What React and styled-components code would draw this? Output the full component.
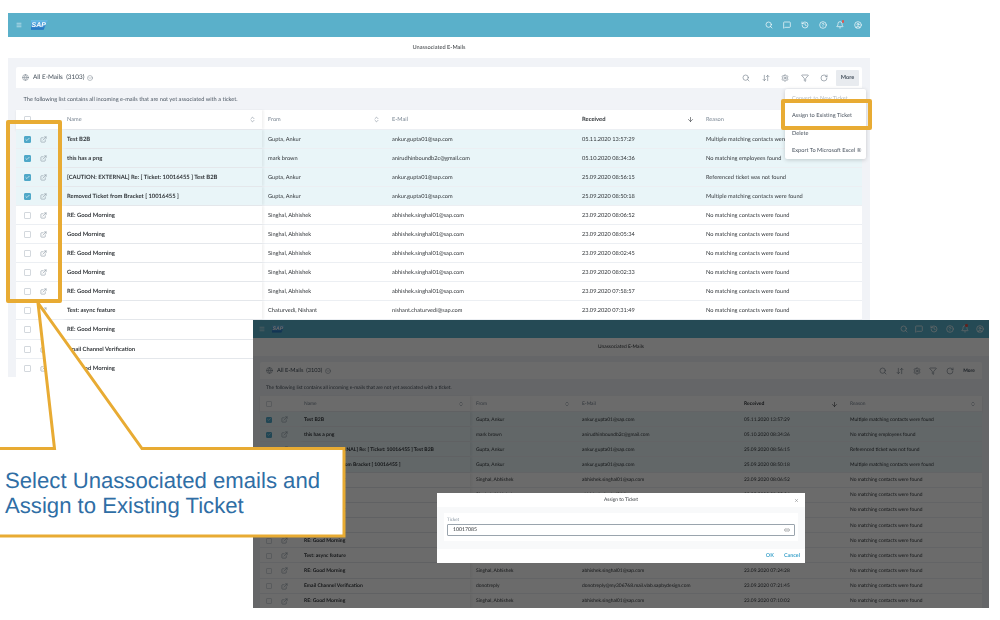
import React from 'react';
import styled, { createGlobalStyle, ThemeProvider } from 'styled-components';
import {
  Search, MessageSquare, History, CircleHelp, Bell, CircleUser, ArrowDownUp, Settings,
  Filter, RotateCw, Globe, CircleChevronDown, ExternalLink, ChevronsUpDown, ArrowDown,
  Check, Menu, Link2, X,
} from 'lucide-react';

const ORANGE = '#e8ab33';

const large = {
  bar: 24, title: 21, gap: 9, side: 8, head: 21, info: 22, th: 19.5, row: 19.1,
  font: 5.65, strong: 5.85, icon: 8, box: 7, pad: 7.5, boxGap: 9, iconSlots: 17.8, barPad: 8, barEnd: 3,
  toolGap: 11.5, cols: '46px 200px 124px 190px 124px 1fr', morePad: 23, moreBg: '#e8ebef',
};

const small = {
  bar: 18, title: 18, gap: 6, side: 7, head: 17, info: 17, th: 16, row: 15.15,
  font: 4.9, strong: 5.05, icon: 7, box: 6, pad: 6, boxGap: 9, iconSlots: 15.3, barPad: 6, barEnd: 1,
  toolGap: 8.7, cols: '39px 171px 106px 162px 106px 1fr', morePad: 20, moreBg: 'transparent',
};

const singhal = { from: 'Singhal, Abhishek', email: 'abhishek.singhal01@sap.com' };
const gupta = { from: 'Gupta, Ankur', email: 'ankur.gupta01@sap.com' };
const noContacts = 'No matching contacts were found';
const multiple = 'Multiple matching contacts were found';

const rows = [
  { ...gupta, name: 'Test B2B', at: '05.11.2020 13:57:29', reason: multiple, selected: true },
  { name: 'this has a png', from: 'mark brown', email: 'anirudhinboundb2c@gmail.com', at: '05.10.2020 08:34:36', reason: 'No matching employees found', selected: true },
  { ...gupta, name: '[CAUTION: EXTERNAL] Re: [ Ticket: 10016455 ] Test B2B', at: '25.09.2020 08:56:15', reason: 'Referenced ticket was not found', selected: true },
  { ...gupta, name: 'Removed Ticket from Bracket [ 10016455 ]', at: '25.09.2020 08:50:18', reason: multiple, selected: true },
  { ...singhal, name: 'RE: Good Morning', at: '23.09.2020 08:06:52', reason: noContacts },
  { ...singhal, name: 'Good Morning', at: '23.09.2020 08:05:34', reason: noContacts },
  { ...singhal, name: 'RE: Good Morning', at: '23.09.2020 08:02:45', reason: noContacts },
  { ...singhal, name: 'Good Morning', at: '23.09.2020 08:02:33', reason: noContacts },
  { ...singhal, name: 'RE: Good Morning', at: '23.09.2020 07:58:57', reason: noContacts },
  { name: 'Test: async feature', from: 'Chaturvedi, Nishant', email: 'nishant.chaturvedi@sap.com', at: '23.09.2020 07:31:49', reason: noContacts },
  { ...singhal, name: 'RE: Good Morning', at: '23.09.2020 07:24:28', reason: noContacts },
  { name: 'Email Channel Verification', from: 'donotreply', email: 'donotreply@my306768.mail.vlab.sapbydesign.com', at: '23.09.2020 07:21:45', reason: noContacts },
  { ...singhal, name: 'RE: Good Morning', at: '23.09.2020 07:10:02', reason: noContacts },
];

const GlobalStyle = createGlobalStyle`
  html, body {
    margin: 0;
    background: #fff;
  }
  * {
    box-sizing: border-box;
  }
`;

const Slide = styled.div`
  position: relative;
  width: 1000px;
  height: 620px;
  overflow: hidden;
  background: #fff;
  font-family: Lato, "Open Sans", "Liberation Sans", sans-serif;
  text-rendering: geometricPrecision;
`;

const Window = styled.div`
  position: absolute;
  left: ${({ $x }) => $x}px;
  top: ${({ $y }) => $y}px;
  width: ${({ $w }) => $w}px;
  height: ${({ $h }) => $h}px;
  display: flex;
  flex-direction: column;
  overflow: hidden;
  background: #fff;
  font-size: ${({ theme }) => theme.font}px;
  color: #32363a;
  filter: blur(0.3px);
`;

const ShellBar = styled.div`
  flex: none;
  height: ${({ theme }) => theme.bar}px;
  display: flex;
  align-items: center;
  padding: 0 ${({ theme }) => theme.barEnd}px 0 ${({ theme }) => theme.barPad}px;
  background: #5ab0ca;
  color: #fff;
`;

const LogoMark = styled.div`
  width: ${({ theme }) => theme.bar * 0.7}px;
  height: ${({ theme }) => theme.bar * 0.4}px;
  margin-left: ${({ theme }) => theme.barPad + 1}px;
  display: flex;
  align-items: center;
  padding-left: 0.5px;
  background: linear-gradient(#6cc0ea, #1f6fc0);
  clip-path: polygon(0 0, 100% 0, 75% 100%, 0 100%);
  font: italic 700 ${({ theme }) => theme.bar * 0.29}px "Liberation Sans", sans-serif;
`;

const ShellIcons = styled.div`
  margin-left: auto;
  display: flex;
  align-items: center;
`;

const ShellIcon = styled.span`
  position: relative;
  width: ${({ theme }) => theme.iconSlots}px;
  display: flex;
  justify-content: center;
`;

const AlertDot = styled.i`
  position: absolute;
  top: -1px;
  right: 5px;
  width: 2.5px;
  height: 2.5px;
  border-radius: 50%;
  background: #e0554d;
`;

const PageTitle = styled.div`
  flex: none;
  height: ${({ theme }) => theme.title}px;
  display: flex;
  align-items: center;
  justify-content: center;
`;

const Panel = styled.div`
  flex: 1;
  min-height: 0;
  padding: ${({ theme }) => theme.gap}px ${({ theme }) => theme.side}px 0;
  background: #f1f3f7;
`;

const CardHead = styled.div`
  height: ${({ theme }) => theme.head}px;
  display: flex;
  align-items: center;
  gap: 3px;
  padding: 0 3px 0 6px;
  background: #fff;
  border-radius: 2px 2px 0 0;
  color: #3f4a55;
  svg {
    color: #7c8791;
  }
`;

const CardTitle = styled.span`
  margin-left: 1px;
  font-size: ${({ theme }) => theme.font + 0.75}px;
`;

const CardTools = styled.div`
  margin-left: auto;
  display: flex;
  align-items: center;
  gap: ${({ theme }) => theme.toolGap}px;
`;

const MoreButton = styled.div`
  width: ${({ theme }) => theme.morePad}px;
  height: ${({ theme }) => theme.head - 5}px;
  margin-left: -3.6px;
  display: flex;
  align-items: center;
  justify-content: center;
  border-radius: 1px;
  background: ${({ theme }) => theme.moreBg};
  font-weight: 700;
  color: #4a5561;
`;

const InfoRow = styled.div`
  height: ${({ theme }) => theme.info}px;
  display: flex;
  align-items: center;
  padding-left: ${({ theme }) => theme.pad}px;
  color: #4a5561;
`;

const Row = styled.div`
  display: grid;
  grid-template-columns: ${({ theme }) => theme.cols};
  height: ${({ theme }) => theme.row}px;
  background: ${({ $selected }) => ($selected ? '#e9f5f8' : '#fff')};
  border-bottom: 1px solid #eceff3;
`;

const HeadRow = styled(Row)`
  height: ${({ theme }) => theme.th}px;
  box-shadow: 0 1px 2px rgba(0, 0, 0, 0.08);
  color: #7b8794;
`;

const Cell = styled.div`
  display: flex;
  align-items: center;
  justify-content: space-between;
  min-width: 0;
  padding: 1px 6px 0;
  white-space: nowrap;
  font-size: ${({ $strong, theme }) => ($strong ? theme.strong : theme.font)}px;
  font-weight: ${({ $strong }) => ($strong ? 700 : 400)};
  color: ${({ $strong }) => ($strong ? '#32363a' : 'inherit')};
`;

const SelectCell = styled(Cell)`
  justify-content: flex-start;
  gap: ${({ theme }) => theme.boxGap}px;
  padding: 1px 0 0 ${({ theme }) => theme.pad}px;
  color: #8a97a3;
`;

const NameCell = styled(Cell)`
  padding-left: 5px;
  box-shadow: 2px 0 2px rgba(0, 0, 0, 0.05);
`;

const CheckBox = styled.span`
  flex: none;
  width: ${({ theme }) => theme.box}px;
  height: ${({ theme }) => theme.box}px;
  display: flex;
  align-items: center;
  justify-content: center;
  border: 0.7px solid ${({ $checked }) => ($checked ? '#4fa8c8' : '#d3d8dd')};
  border-radius: 1px;
  background: ${({ $checked }) => ($checked ? '#4fa8c8' : '#fff')};
  color: #fff;
`;

const SortIcon = styled(ChevronsUpDown)`
  flex: none;
  width: ${({ theme }) => theme.icon - 1}px;
  height: ${({ theme }) => theme.icon - 1}px;
`;

const Scrim = styled.div`
  position: absolute;
  inset: 0;
  display: flex;
  justify-content: center;
  align-items: flex-start;
  padding-top: 173px;
  background: rgba(0, 0, 0, 0.58);
`;

const Dialog = styled.div`
  width: 368px;
  height: 70px;
  display: flex;
  flex-direction: column;
  background: #fff;
  color: #32363a;
  font-size: 4.9px;
`;

const DialogHead = styled.div`
  position: relative;
  height: 14px;
  display: flex;
  align-items: center;
  justify-content: center;
  svg {
    position: absolute;
    right: 6px;
    color: #6a6d70;
  }
`;

const DialogBody = styled.div`
  height: 42px;
  padding: 6px 7px;
  background: #f8f9fa;
`;

const FormCard = styled.div`
  height: 28px;
  padding: 3px 3px 0;
  background: #fff;
  color: #8a97a3;
  font-size: 4.6px;
`;

const TicketInput = styled.div`
  height: 12px;
  margin-top: 2px;
  display: flex;
  align-items: center;
  justify-content: space-between;
  padding: 0 4px 0 5px;
  border: 1px solid #9aa4ad;
  border-radius: 1px;
  color: #32363a;
  font-size: 5.2px;
`;

const DialogFoot = styled.div`
  flex: 1;
  display: flex;
  align-items: center;
  justify-content: flex-end;
  gap: 10px;
  padding-right: 5px;
  color: #42a5cc;
  font-size: 5.4px;
  font-weight: 700;
`;

const DropMenu = styled.div`
  position: absolute;
  top: 76px;
  right: 4px;
  width: 81px;
  height: 70px;
  display: flex;
  flex-direction: column;
  justify-content: space-around;
  padding: 1px 7px 0;
  background: #fff;
  border-radius: 2px;
  box-shadow: 0 1px 4px rgba(0, 0, 0, 0.18);
  white-space: nowrap;
`;

const MenuItem = styled.div`
  color: ${({ $disabled }) => ($disabled ? '#b3bac1' : '#46505c')};
`;

const Frame = styled.div`
  position: absolute;
  left: ${({ $x }) => $x}px;
  top: ${({ $y }) => $y}px;
  width: ${({ $w }) => $w}px;
  height: ${({ $h }) => $h}px;
  border: 4px solid ${ORANGE};
  border-radius: 2px;
`;

const Callout = styled.div`
  position: absolute;
  left: 0;
  top: 300px;
  width: 350px;
  height: 242px;
`;

const CalloutText = styled.div`
  position: absolute;
  left: 5px;
  top: 168px;
  font: 22.15px/25px "Liberation Sans", Arial, sans-serif;
  color: #2f6ea5;
  white-space: nowrap;
`;

const EmailWindow = ({ menu, children }) => (
  <>
    <ShellBar>
      <Menu size={6} />
      <LogoMark>SAP</LogoMark>
      <ShellIcons>
        <ShellIcon><Search size={8} /></ShellIcon>
        <ShellIcon><MessageSquare size={8} /></ShellIcon>
        <ShellIcon><History size={8} /></ShellIcon>
        <ShellIcon><CircleHelp size={8} /></ShellIcon>
        <ShellIcon><Bell size={8} /><AlertDot /></ShellIcon>
        <ShellIcon><CircleUser size={8} /></ShellIcon>
      </ShellIcons>
    </ShellBar>
    <PageTitle>Unassociated E-Mails</PageTitle>
    <Panel>
      <CardHead>
        <Globe size={7} />
        <CardTitle>All E-Mails&nbsp; (3103)</CardTitle>
        <CircleChevronDown size={6} />
        <CardTools>
          <Search size={8} />
          <ArrowDownUp size={8} />
          <Settings size={8} />
          <Filter size={8} />
          <RotateCw size={8} />
          <MoreButton>More</MoreButton>
        </CardTools>
      </CardHead>
      <InfoRow>The following list contains all incoming e-mails that are not yet associated with a ticket.</InfoRow>
      <HeadRow>
        <SelectCell><CheckBox /></SelectCell>
        <NameCell>Name<SortIcon /></NameCell>
        <Cell>From<SortIcon /></Cell>
        <Cell>E-Mail</Cell>
        <Cell $strong>Received<ArrowDown size={7} /></Cell>
        <Cell>Reason<SortIcon /></Cell>
      </HeadRow>
      {rows.map((row) => (
        <Row key={row.at} $selected={row.selected}>
          <SelectCell>
            <CheckBox $checked={row.selected}>
              {row.selected && <Check size={5} strokeWidth={3} />}
            </CheckBox>
            <ExternalLink size={7} />
          </SelectCell>
          <NameCell $strong>{row.name}</NameCell>
          <Cell>{row.from}</Cell>
          <Cell>{row.email}</Cell>
          <Cell>{row.at}</Cell>
          <Cell>{row.reason}</Cell>
        </Row>
      ))}
    </Panel>
    {menu && (
      <DropMenu>
        <MenuItem $disabled>Convert to New Ticket</MenuItem>
        <MenuItem>Assign to Existing Ticket</MenuItem>
        <MenuItem>Delete</MenuItem>
        <MenuItem>Export To Microsoft Excel ®</MenuItem>
      </DropMenu>
    )}
    {children}
  </>
);

const App = () => (
  <Slide>
    <GlobalStyle />
    <ThemeProvider theme={large}>
      <Window $x={8} $y={13} $w={862} $h={364}>
        <EmailWindow menu />
      </Window>
    </ThemeProvider>
    <ThemeProvider theme={small}>
      <Window $x={253} $y={320} $w={736} $h={288}>
        <EmailWindow>
          <Scrim>
            <Dialog>
              <DialogHead>Assign to Ticket<X size={5} /></DialogHead>
              <DialogBody>
                <FormCard>
                  Ticket
                  <TicketInput>10017085<Link2 size={6} color="#6a6d70" /></TicketInput>
                </FormCard>
              </DialogBody>
              <DialogFoot><span>OK</span><span>Cancel</span></DialogFoot>
            </Dialog>
          </Scrim>
        </EmailWindow>
      </Window>
    </ThemeProvider>
    <Frame $x={6} $y={120} $w={56} $h={183} />
    <Frame $x={781} $y={99} $w={91} $h={31} />
    <Callout>
      <svg width="350" height="242" viewBox="0 0 350 242">
        <path
          d="M-5 148.5H54.5L38 3L142 148.5H344V236H-5Z"
          fill="#fff"
          stroke={ORANGE}
          strokeWidth="3"
        />
      </svg>
      <CalloutText>Select Unassociated emails and<br />Assign to Existing Ticket</CalloutText>
    </Callout>
  </Slide>
);

export default App;
